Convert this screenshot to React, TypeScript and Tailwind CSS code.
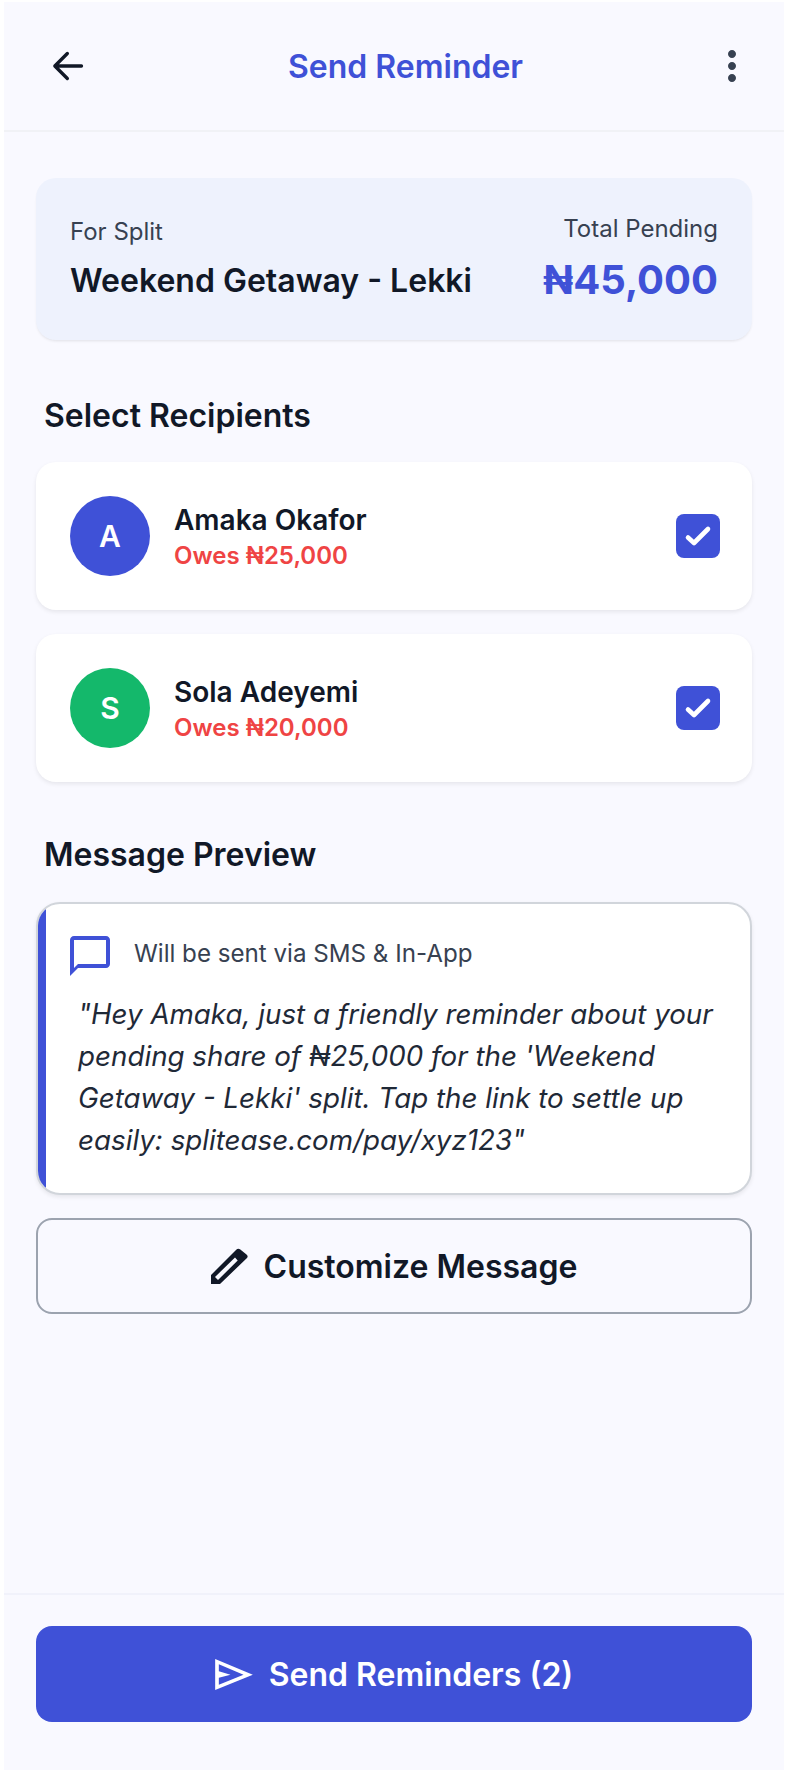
import { MdOutlineChatBubbleOutline, MdMoreVert } from "react-icons/md";

function Recipient({ letter, name, owes, color }: { letter: string; name: string; owes: string; color: string }) {
  return (
    <div className="flex h-[148px] items-center rounded-[20px] bg-white pl-[34px] pr-[32px] shadow-[0_2px_4px_rgba(0,0,0,0.08)]">
      <div className={`flex h-[80px] w-[80px] items-center justify-center rounded-full text-[30px] font-semibold text-white ${color}`}>{letter}</div>
      <div className="ml-[24px] flex-1 pt-[2px]">
        <div className="text-[28px] font-semibold leading-[36px] text-[#111827]">{name}</div>
        <div className="pt-[2px] text-[24px] font-semibold leading-[32px] text-[#ef4444]">{owes}</div>
      </div>
      <div className="flex h-[44px] w-[44px] items-center justify-center rounded-[8px] bg-[#3f51d7]">
        <svg width="44" height="44" viewBox="0 0 44 44" fill="none" stroke="white" strokeWidth="4.6" strokeLinecap="round" strokeLinejoin="round">
          <path d="M12 23.5l6 5.5L32 15" />
        </svg>
      </div>
    </div>
  );
}

export default function App() {
  return (
    <div className="flex h-[1770px] flex-col bg-white px-[4px] pt-[2px] font-['Inter',sans-serif]">
      <div className="flex flex-1 flex-col bg-[#f9f9ff]">
        <header className="flex h-[130px] items-center justify-between border-b-2 border-[#f1f2f6] pl-[45px] pr-[28px]">
          <div className="w-[54px]">
            <svg width="40" height="40" viewBox="0 0 24 24" fill="none" stroke="#111827" strokeWidth="2" strokeLinecap="round" strokeLinejoin="round">
              <path d="M19.5 12H4M11 4.5L3.5 12l7.5 7.5" />
            </svg>
          </div>
          <h1 className="pt-[2px] text-[32px] font-semibold text-[#3f51d7]">Send Reminder</h1>
          <MdMoreVert size={48} className="text-[#374151]" />
        </header>

        <main className="flex-1 px-[32px] pt-[46px]">
          <section className="flex h-[162px] items-center justify-between rounded-[20px] bg-[#eef2fd] px-[34px] shadow-[0_2px_3px_-1px_rgba(0,0,0,0.1)]">
            <div>
              <div className="-mt-[2px] text-[24px] leading-[34px] text-[#374151]">For Split</div>
              <div className="mt-[11px] text-[32px] font-semibold leading-[42px] text-[#111827]">Weekend Getaway - Lekki</div>
            </div>
            <div className="pt-[3px] text-right">
              <div className="-mt-[2px] text-[24px] leading-[34px] text-[#374151]">Total Pending</div>
              <div className="mt-[6px] text-[40px] font-bold leading-[56px] text-[#3f51d7]">₦45,000</div>
            </div>
          </section>

          <h2 className="mt-[55px] pl-[8px] text-[32px] font-semibold leading-[42px] text-[#111827]">Select Recipients</h2>
          <div className="mt-[25px] flex flex-col gap-[24px]">
            <Recipient letter="A" name="Amaka Okafor" owes="Owes ₦25,000" color="bg-[#3f51d7]" />
            <Recipient letter="S" name="Sola Adeyemi" owes="Owes ₦20,000" color="bg-[#14b86b]" />
          </div>

          <h2 className="mt-[52px] pl-[8px] text-[32px] font-semibold leading-[42px] text-[#111827]">Message Preview</h2>
          <section className="mt-[26px] flex h-[293px] overflow-hidden rounded-[24px] border-2 border-[#d1d5db] bg-white shadow-[0_2px_4px_rgba(0,0,0,0.08)]">
            <div className="w-[8px] shrink-0 bg-[#3f51d7]" />
            <div className="flex-1 pl-[24px] pr-[24px] pt-[28px]">
              <div className="flex items-center">
                <MdOutlineChatBubbleOutline size={48} className="-ml-[4px] text-[#3f51d7]" />
                <span className="-mt-[3px] ml-[20px] text-[24.15px] text-[#374151]">Will be sent via SMS &amp; In-App</span>
              </div>
              <p className="mt-[13px] pl-[8px] text-[27.75px] italic leading-[42px] text-[#1f2937]">
                "Hey Amaka, just a friendly reminder about your pending share of ₦25,000 for the 'Weekend Getaway - Lekki' split. Tap the link to settle up easily: splitease.com/pay/xyz123"
              </p>
            </div>
          </section>
          <button className="mt-[23px] flex h-[96px] w-full items-center justify-center gap-[16px] rounded-[16px] border-2 border-[#9ca3af] pt-[2px] text-[32px] font-semibold text-[#111827]">
            <svg width="37" height="36" viewBox="0 0 37 36" fill="#111827" fillRule="evenodd" className="-mt-[2px]">
              <path d="M0 27L25.5 1.5Q27 0 29 1.2L35.5 6.5Q37.5 8.5 36 10L9 36H0ZM4 29L24 9.5L26.7 12.5L7 32Z" />
            </svg>
            Customize Message
          </button>
        </main>

        <footer className="flex h-[177px] flex-col border-t-2 border-[#f1f2fb] px-[32px] pt-[31px]">
          <button className="flex h-[96px] w-full items-center justify-center gap-[16px] rounded-[16px] bg-[#3f51d7] pt-[2px] text-[32px] font-semibold text-white">
            <svg width="38" height="31" viewBox="0 0 113 93" fill="white" fillRule="evenodd" className="-mt-[2px]">
              <path d="M0 0L113 47L0 93ZM11 16L85 47L11 77V56L46 47L11 37Z" />
            </svg>
            Send Reminders (2)
          </button>
        </footer>
      </div>
    </div>
  );
}
